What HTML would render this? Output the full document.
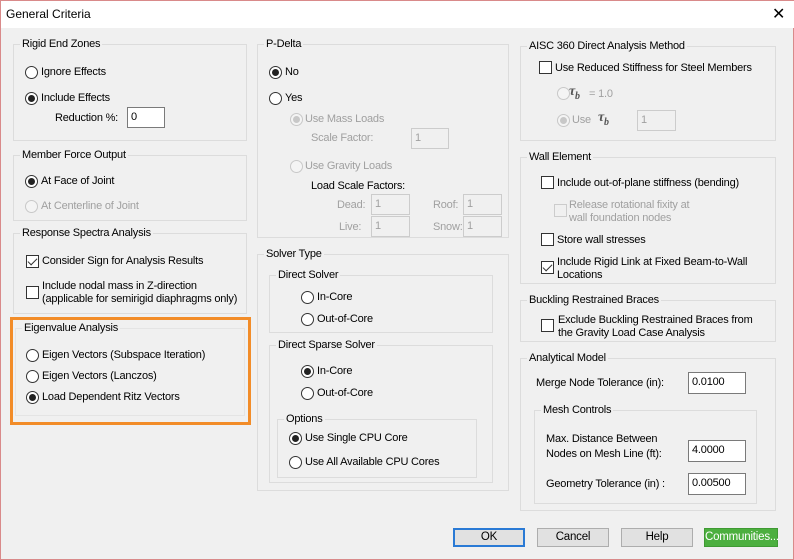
<!DOCTYPE html>
<html><head><meta charset="utf-8"><style>
*{box-sizing:border-box;margin:0;padding:0}
body{width:794px;height:560px;background:#f0f0f0;font-family:"Liberation Sans",Arial,sans-serif;font-size:11px;letter-spacing:-0.2px;color:#000;position:relative;overflow:hidden;border:1px solid #d98a8a}
.a{position:absolute;white-space:nowrap}
.tb{position:absolute;left:0;top:0;width:794px;height:27px;background:#fff}
.g{position:absolute;border:1px solid #dcdcdc}
.g>.t{position:absolute;top:-8px;left:6px;background:#f0f0f0;padding:0 2px;line-height:14px}
.r{position:absolute;width:13px;height:13px;border:1px solid #333;border-radius:50%;background:#fff}
.r.on::after{content:"";position:absolute;left:2px;top:2px;width:7px;height:7px;border-radius:50%;background:#222}
.r.dis{border-color:#c8c8c8;background:#f4f4f4}
.r.dis.on::after{background:#c8c8c8}
.c{position:absolute;width:13px;height:13px;border:1px solid #333;background:#fff}
.c.dis{border-color:#ccc;background:#f0f0f0}
.c.on::after{content:"";position:absolute;left:3px;top:0px;width:4px;height:8px;border:solid #333;border-width:0 1.5px 1.5px 0;transform:rotate(45deg)}
.i{position:absolute;height:21px;border:1px solid #7a7a7a;background:#fff;padding:2px 3px;line-height:14px}
.i.dis{border-color:#ccc;background:#f0f0f0;color:#a0a0a0}
.d{color:#a0a0a0}
.b{position:absolute;top:527px;height:19px;width:72px;border:1px solid #adadad;background:#e1e1e1;text-align:center;line-height:17px;font-size:11.5px}
.tau{font-family:"Liberation Serif",serif;font-weight:bold;font-style:italic;font-size:14px;color:#555}
</style></head><body>
<div class="tb"></div>
<div class="a" style="left:5px;top:6px;font-size:12px;letter-spacing:0">General Criteria</div>
<div class="a" style="left:771px;top:3px;font-size:16px">✕</div>

<div class="g" style="left:12px;top:43px;width:234px;height:97px"><span class="t">Rigid End Zones</span></div>
<div class="r" style="left:24px;top:65px"></div><div class="a" style="left:40px;top:65px">Ignore Effects</div>
<div class="r on" style="left:24px;top:91px"></div><div class="a" style="left:40px;top:91px">Include Effects</div>
<div class="a" style="left:54px;top:111px">Reduction %:</div>
<div class="i" style="left:126px;top:106px;width:38px">0</div>

<div class="g" style="left:12px;top:154px;width:234px;height:66px"><span class="t">Member Force Output</span></div>
<div class="r on" style="left:24px;top:174px"></div><div class="a" style="left:40px;top:174px">At Face of Joint</div>
<div class="r dis" style="left:24px;top:199px"></div><div class="a d" style="left:40px;top:199px">At Centerline of Joint</div>

<div class="g" style="left:12px;top:232px;width:234px;height:81px"><span class="t">Response Spectra Analysis</span></div>
<div class="c on" style="left:25px;top:254px"></div><div class="a" style="left:41px;top:254px">Consider Sign for Analysis Results</div>
<div class="c" style="left:25px;top:285px"></div><div class="a" style="left:41px;top:279px;line-height:13px">Include nodal mass in Z-direction<br>(applicable for semirigid diaphragms only)</div>

<div class="a" style="left:9px;top:316px;width:241px;height:108px;border:3px solid #f28c28"></div>
<div class="g" style="left:14px;top:327px;width:230px;height:88px;border-color:#e4e4e4"><span class="t">Eigenvalue Analysis</span></div>
<div class="r" style="left:25px;top:348px"></div><div class="a" style="left:41px;top:348px">Eigen Vectors (Subspace Iteration)</div>
<div class="r" style="left:25px;top:369px"></div><div class="a" style="left:41px;top:369px">Eigen Vectors (Lanczos)</div>
<div class="r on" style="left:25px;top:390px"></div><div class="a" style="left:41px;top:390px">Load Dependent Ritz Vectors</div>

<div class="g" style="left:256px;top:43px;width:252px;height:194px"><span class="t">P-Delta</span></div>
<div class="r on" style="left:268px;top:65px"></div><div class="a" style="left:284px;top:65px">No</div>
<div class="r" style="left:268px;top:91px"></div><div class="a" style="left:284px;top:91px">Yes</div>
<div class="r dis on" style="left:289px;top:112px"></div><div class="a d" style="left:304px;top:112px">Use Mass Loads</div>
<div class="a d" style="left:310px;top:131px">Scale Factor:</div>
<div class="i dis" style="left:410px;top:127px;width:38px">1</div>
<div class="r dis" style="left:289px;top:159px"></div><div class="a d" style="left:304px;top:159px">Use Gravity Loads</div>
<div class="a" style="left:310px;top:179px">Load Scale Factors:</div>
<div class="a d" style="left:336px;top:198px">Dead:</div><div class="i dis" style="left:370px;top:193px;width:39px">1</div>
<div class="a d" style="left:432px;top:198px">Roof:</div><div class="i dis" style="left:462px;top:193px;width:39px">1</div>
<div class="a d" style="left:338px;top:220px">Live:</div><div class="i dis" style="left:370px;top:215px;width:39px">1</div>
<div class="a d" style="left:432px;top:220px">Snow:</div><div class="i dis" style="left:462px;top:215px;width:39px">1</div>

<div class="g" style="left:256px;top:253px;width:252px;height:237px"><span class="t">Solver Type</span></div>
<div class="g" style="left:268px;top:274px;width:224px;height:58px"><span class="t">Direct Solver</span></div>
<div class="r" style="left:300px;top:290px"></div><div class="a" style="left:316px;top:290px">In-Core</div>
<div class="r" style="left:300px;top:312px"></div><div class="a" style="left:316px;top:312px">Out-of-Core</div>
<div class="g" style="left:268px;top:344px;width:224px;height:138px"><span class="t">Direct Sparse Solver</span></div>
<div class="r on" style="left:300px;top:364px"></div><div class="a" style="left:316px;top:364px">In-Core</div>
<div class="r" style="left:300px;top:386px"></div><div class="a" style="left:316px;top:386px">Out-of-Core</div>
<div class="g" style="left:276px;top:418px;width:200px;height:59px"><span class="t">Options</span></div>
<div class="r on" style="left:288px;top:431px"></div><div class="a" style="left:304px;top:431px">Use Single CPU Core</div>
<div class="r" style="left:288px;top:455px"></div><div class="a" style="left:304px;top:455px">Use All Available CPU Cores</div>

<div class="g" style="left:519px;top:45px;width:256px;height:95px"><span class="t">AISC 360 Direct Analysis Method</span></div>
<div class="c" style="left:538px;top:60px"></div><div class="a" style="left:554px;top:61px">Use Reduced Stiffness for Steel Members</div>
<div class="r dis" style="left:556px;top:86px"></div><div class="a tau" style="left:568px;top:83px">τ<sub style="font-size:10px">b</sub></div><div class="a d" style="left:588px;top:87px">= 1.0</div>
<div class="r dis on" style="left:556px;top:113px"></div><div class="a d" style="left:571px;top:113px">Use</div><div class="a tau" style="left:597px;top:109px">τ<sub style="font-size:10px">b</sub></div>
<div class="i dis" style="left:636px;top:109px;width:39px">1</div>

<div class="g" style="left:519px;top:156px;width:256px;height:127px"><span class="t">Wall Element</span></div>
<div class="c" style="left:540px;top:175px"></div><div class="a" style="left:556px;top:176px">Include out-of-plane stiffness (bending)</div>
<div class="c dis" style="left:553px;top:203px"></div><div class="a d" style="left:568px;top:198px;line-height:13px">Release rotational fixity at<br>wall foundation nodes</div>
<div class="c" style="left:540px;top:232px"></div><div class="a" style="left:556px;top:233px">Store wall stresses</div>
<div class="c on" style="left:540px;top:260px"></div><div class="a" style="left:556px;top:255px;line-height:13px">Include Rigid Link at Fixed Beam-to-Wall<br>Locations</div>

<div class="g" style="left:519px;top:299px;width:256px;height:42px"><span class="t">Buckling Restrained Braces</span></div>
<div class="c" style="left:540px;top:318px"></div><div class="a" style="left:557px;top:313px;line-height:13px">Exclude Buckling Restrained Braces from<br>the Gravity Load Case Analysis</div>

<div class="g" style="left:519px;top:357px;width:256px;height:153px"><span class="t">Analytical Model</span></div>
<div class="a" style="left:535px;top:376px">Merge Node Tolerance (in):</div>
<div class="i" style="left:687px;top:371px;width:58px;height:22px">0.0100</div>
<div class="g" style="left:533px;top:409px;width:223px;height:94px"><span class="t">Mesh Controls</span></div>
<div class="a" style="left:545px;top:431px;line-height:15px">Max. Distance Between<br>Nodes on Mesh Line (ft):</div>
<div class="i" style="left:687px;top:439px;width:58px;height:22px">4.0000</div>
<div class="a" style="left:545px;top:477px">Geometry Tolerance (in) :</div>
<div class="i" style="left:687px;top:472px;width:58px;height:22px">0.00500</div>

<div class="b" style="left:452px;border:2px solid #2a7ad5;line-height:15px">OK</div>
<div class="b" style="left:536px">Cancel</div>
<div class="b" style="left:620px">Help</div>
<div class="b" style="left:703px;width:74px;background:#4caf3f;border-color:#3f9a33;color:#fff">Communities...</div>
</body></html>
